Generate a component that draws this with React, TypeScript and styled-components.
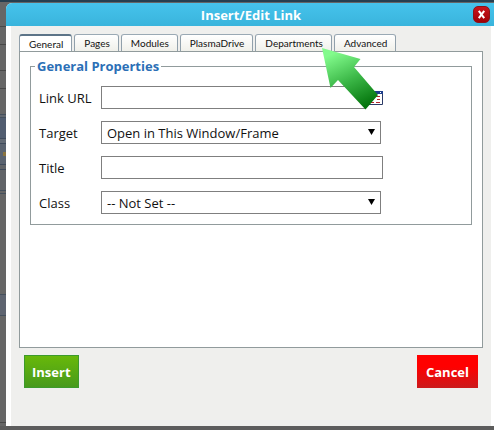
import React from 'react';
import styled, { createGlobalStyle, css } from 'styled-components';

const GlobalStyle = createGlobalStyle`
  *, *::before, *::after { box-sizing: border-box; }
  body {
    margin: 0;
    background: #636363;
    font-family: 'Open Sans', 'Noto Sans', sans-serif;
    color: #111;
  }
  button, input, select { font-family: inherit; color: inherit; }
`;

const Backdrop = styled.div`
  display: flex;
  min-height: 100vh;
  padding: 3px 0 4px 6px;
  background:
    linear-gradient(#263f50, #263f50) 0 0 / 100% 2px no-repeat,
    linear-gradient(#5c5c5c, #5c5c5c) 0 100% / 100% 4px no-repeat,
    linear-gradient(#8a743f, #8a743f) 3px 152px / 3px 4px no-repeat,
    linear-gradient(
      #666 26px, #484848 26px 27px, #666 27px 44px, #484848 44px 45px,
      #666 45px 70px, #484848 70px 71px, #666 71px 88px, #484848 88px 89px,
      #666 89px 114px, #45505d 114px 115px, #626870 115px 117px, #45505d 117px 118px,
      #515d70 118px 138px, #3f4b5c 138px 139px, #626a75 139px 143px, #3f4b5c 143px 144px,
      #5a6370 144px 164px, #3f4b5c 164px 165px,
      #616468 165px 169px, #3f4b5c 169px 170px, #616468 170px 190px, #45505d 190px 191px,
      #666 191px 193px, #45505d 193px 194px, #666 194px 294px, #45505d 294px 295px,
      #5e6470 295px 315px, #45505d 315px 316px, #666 316px 422px, #484848 422px 423px, #666 423px
    );
`;

const Dialog = styled.section`
  flex: 1;
  min-width: 0;
  display: flex;
  flex-direction: column;
  background: #fff;
  border-radius: 6px 0 0 0;
`;

const TitleBar = styled.header`
  display: grid;
  grid-template-columns: 1fr auto 1fr;
  align-items: center;
  height: 23px;
  padding: 0 4px 0 0;
  border-radius: 6px 0 0 0;
  background: linear-gradient(#46c3ec, #39b4dc);
`;

const DialogTitle = styled.h1`
  grid-column: 2;
  margin: 0;
  padding-left: 6px;
  font-size: 13px;
  line-height: 22px;
  font-weight: 700;
  color: #fff;
`;

const CloseButton = styled.button`
  justify-self: end;
  display: grid;
  place-items: center;
  width: 17px;
  height: 17px;
  padding: 0;
  border: 1px solid #8e1218;
  border-radius: 5px;
  background: linear-gradient(#c9151b, #a00006);
`;

const Body = styled.div`
  flex: 1;
  display: flex;
  flex-direction: column;
  margin: 0 3px 0 5px;
  padding: 8px 8px 0;
  background: #efefed;
`;

const TabList = styled.div`
  display: flex;
  gap: 2px;
  margin-bottom: -1px;
`;

const Tab = styled.button<{ $active?: boolean }>`
  height: 18px;
  padding: 0 8px 0 9px;
  border: 1px solid #919b9c;
  border-color: #9aa9b4 #91a0ab #919b9c;
  border-radius: 3px 3px 0 0;
  background: linear-gradient(#fff, #f0f0ea);
  font-family: Lato, 'Open Sans', sans-serif;
  font-size: 10px;
  line-height: 16px;
  white-space: nowrap;
  ${({ $active }) => $active && css`
    border-top: 2px solid #5c7488;
    border-bottom-color: #fff;
    background: #fff;
    line-height: 14px;
  `}
`;

const Panel = styled.div`
  flex: 1;
  padding: 6px 10px;
  border: 1px solid #919b9c;
  background: #fff;
`;

const FieldGroup = styled.fieldset`
  display: grid;
  grid-template-columns: 53px minmax(0, 282px);
  column-gap: 9px;
  row-gap: 12px;
  align-items: center;
  margin: 0;
  padding: 12px 8px 10px;
  border: 1px solid #919b9c;
`;

const Legend = styled.legend`
  padding: 0 2px;
  margin-left: -4px;
  font-size: 13px;
  line-height: 16px;
  font-weight: 700;
  color: #2b6fb6;
`;

const Label = styled.label`
  font-size: 13px;
  line-height: 20px;
  white-space: nowrap;
`;

const control = css`
  width: 100%;
  min-width: 0;
  height: 23px;
  margin: 0;
  border: 1px solid #7f7f7f;
  border-radius: 0;
  background: #fff;
  font-size: 13px;
`;

const TextInput = styled.input`
  ${control}
  padding: 0 5px;
`;

const BrowseField = styled.div`
  position: relative;
  display: flex;
  align-items: center;
  gap: 2px;
`;

const BrowseButton = styled.button`
  display: flex;
  padding: 0;
  border: 0;
  background: none;
`;

const Pointer = styled.svg`
  position: absolute;
  right: 2px;
  top: -38px;
  pointer-events: none;
`;

const SelectField = styled.div`
  display: grid;
  align-items: center;
  margin-right: 2px;
  & > * { grid-area: 1 / 1; }
`;

const Select = styled.select`
  ${control}
  appearance: none;
  padding: 1px 20px 0 5px;
`;

const Caret = styled.svg`
  justify-self: end;
  margin: 0 6px 1px 0;
  pointer-events: none;
`;

const Footer = styled.footer`
  display: flex;
  justify-content: space-between;
  padding: 7px 5px 38px;
`;

const ActionButton = styled.button<{ $tone: 'go' | 'stop' }>`
  height: 33px;
  border: 1px solid;
  font-size: 13px;
  font-weight: 700;
  color: #fff;
  ${({ $tone }) => $tone === 'go'
    ? css`padding: 0 7px; border-color: #3c9a2c; background: linear-gradient(#68b80a, #479a1c);`
    : css`padding: 0 8px; border-color: transparent; background: linear-gradient(#ff0000 35%, #cb1a1c) border-box;`}
`;

const tabs = ['General', 'Pages', 'Modules', 'PlasmaDrive', 'Departments', 'Advanced'];

function DropDown({ id, option }: { id: string; option: string }) {
  return (
    <SelectField>
      <Select id={id}><option>{option}</option></Select>
      <Caret width="7" height="6" viewBox="0 0 7 6" aria-hidden="true">
        <path d="M0 0h7L3.5 6z" fill="#000" />
      </Caret>
    </SelectField>
  );
}

export default function App() {
  return (
    <>
      <GlobalStyle />
      <Backdrop>
        <Dialog role="dialog" aria-labelledby="dialog-title">
          <TitleBar>
            <DialogTitle id="dialog-title">Insert/Edit Link</DialogTitle>
            <CloseButton type="button" aria-label="Close">
              <svg width="9" height="9" viewBox="0 0 9 9" aria-hidden="true">
                <path d="M1.8.8 7.2 8.2M7.2.8 1.8 8.2" stroke="#fff" strokeWidth="2" />
              </svg>
            </CloseButton>
          </TitleBar>
          <Body>
            <TabList role="tablist">
              {tabs.map((name, i) => (
                <Tab key={name} type="button" role="tab" aria-selected={i === 0} $active={i === 0}>{name}</Tab>
              ))}
            </TabList>
            <Panel role="tabpanel">
              <FieldGroup>
                <Legend>General Properties</Legend>
                <Label htmlFor="url">Link URL</Label>
                <BrowseField>
                  <TextInput id="url" type="text" />
                  <BrowseButton type="button" aria-label="Browse">
                    <svg width="15" height="14" viewBox="0 0 15 14" aria-hidden="true">
                      <path d="M.5.5h14v13H.5z" fill="#fff" stroke="#2b3a66" />
                      <path d="M0 0h15v3H0z" fill="#1f3f8c" />
                      <path d="M12 1h1v1h-1z" fill="#fff" />
                      <path d="M3 5.5h3M3 8.5h3M3 11.5h3M8 5.5h4M9 8.5h3M8 11.5h4" stroke="#b3262b" />
                    </svg>
                  </BrowseButton>
                  <Pointer width="59" height="63" viewBox="0 0 59 63" aria-hidden="true">
                    <defs>
                      <linearGradient id="pointer-fill" x1="14" y1="4" x2="40" y2="60" gradientUnits="userSpaceOnUse">
                        <stop offset="0" stopColor="#82fb8c" />
                        <stop offset="0.5" stopColor="#3cb848" />
                        <stop offset="1" stopColor="#04740c" />
                      </linearGradient>
                    </defs>
                    <path d="M0 0 38.5 11 32 19 56 47 43.500 61.500 16 32 8.500 40z" fill="url(#pointer-fill)" />
                  </Pointer>
                </BrowseField>
                <Label htmlFor="target">Target</Label>
                <DropDown id="target" option="Open in This Window/Frame" />
                <Label htmlFor="title">Title</Label>
                <TextInput id="title" type="text" />
                <Label htmlFor="class">Class</Label>
                <DropDown id="class" option="-- Not Set --" />
              </FieldGroup>
            </Panel>
            <Footer>
              <ActionButton type="button" $tone="go">Insert</ActionButton>
              <ActionButton type="button" $tone="stop">Cancel</ActionButton>
            </Footer>
          </Body>
        </Dialog>
      </Backdrop>
    </>
  );
}
